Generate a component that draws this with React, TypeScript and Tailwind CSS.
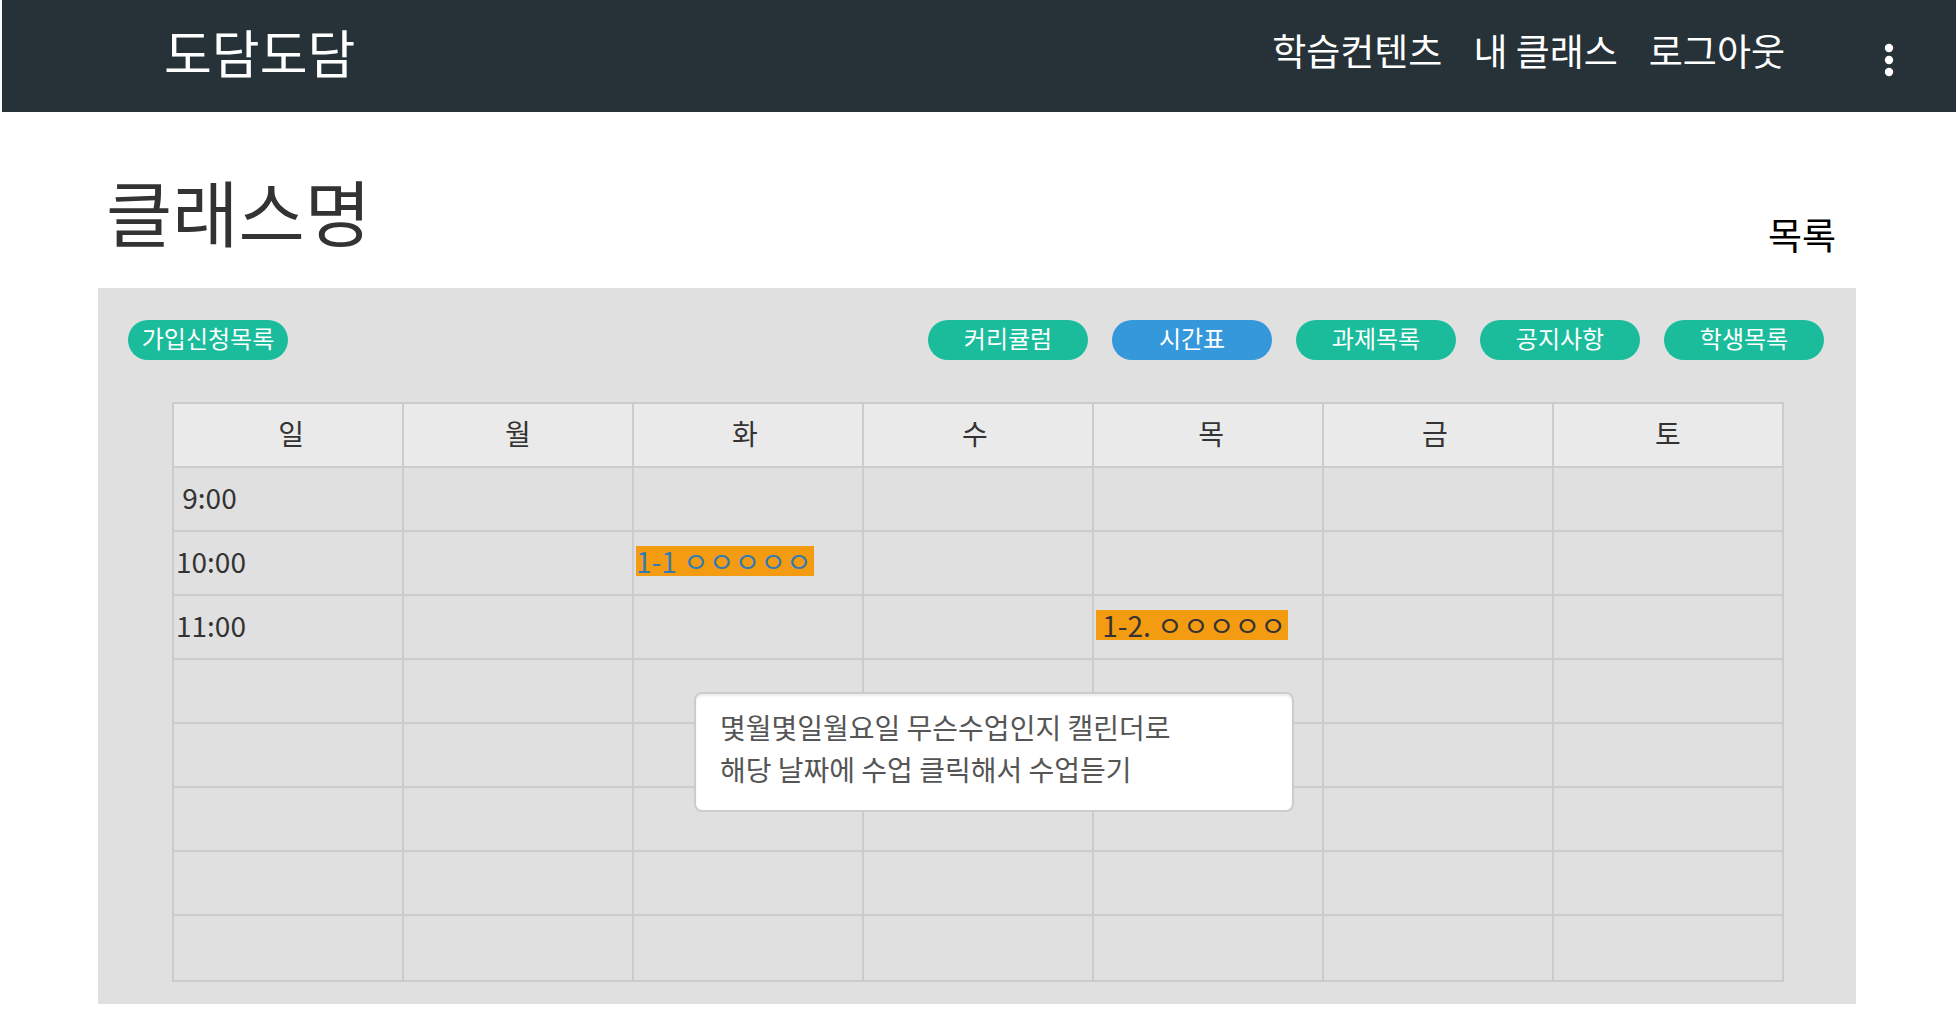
type Lesson = { label: string; tone: string; link?: boolean };

const days = ["\u00a0일", "월", "화\u00a0", "수\u00a0", "\u00a0목", "금\u00a0", "토"];

const times = ["\u00a09:00", "10:00", "11:00", "", "", "", "", ""];

const lessons: Record<string, Lesson> = {
  "1-2": { label: "1-1 ㅇㅇㅇㅇㅇ", tone: "text-[#337ab7]", link: true },
  "2-4": { label: "\u00a01-2. ㅇㅇㅇㅇㅇ", tone: "text-[#333333]" },
};

const tabs = ["커리큘럼", "시간표", "과제목록", "공지사항", "학생목록"];

const note = "몇월몇일월요일 무슨수업인지 캘린더로\n해당 날짜에 수업 클릭해서 수업듣기";

function Pill({ label, active = false }: { label: string; active?: boolean }) {
  return (
    <button
      type="button"
      className={`h-10 w-40 rounded-full pb-1 text-center text-[24px] leading-[36px] text-white ${
        active ? "bg-[#3498db]" : "bg-[#1abc9c]"
      }`}
    >
      {label}
    </button>
  );
}

function LessonTag({ lesson }: { lesson: Lesson }) {
  const box = "block h-[30px] w-fit whitespace-nowrap bg-[#f39c12] pr-0.5 leading-[30px]";
  return lesson.link ? (
    <a href="#lesson" className={`${box} ${lesson.tone}`}>
      {lesson.label}
    </a>
  ) : (
    <span className={`${box} ${lesson.tone}`}>{lesson.label}</span>
  );
}

export default function App() {
  return (
    <div className="min-h-screen bg-white pb-8 font-['Noto_Sans_CJK_KR','Noto_Sans',sans-serif] text-[#333333]">
      <header className="ml-0.5 flex h-28 items-center bg-[#263238] pr-[61px] pl-[162px] text-white">
        <a href="#home" className="pb-2 text-[52px] leading-[64px]">
          도담도담
        </a>
        <nav className="mr-[98px] ml-auto flex gap-[31px] pb-3 text-[37px] leading-[48px]">
          <a href="#contents">학습컨텐츠</a>
          <a href="#classes">내 클래스</a>
          <a href="#logout">로그아웃</a>
        </nav>
        <button type="button" aria-label="메뉴" className="pt-2">
          <svg width="12" height="36" viewBox="0 0 12 36" fill="currentColor" className="block">
            <circle cx="6" cy="6" r="4.2" />
            <circle cx="6" cy="18" r="4.2" />
            <circle cx="6" cy="30" r="4.2" />
          </svg>
        </button>
      </header>

      <main className="mr-[100px] ml-[98px]">
        <div className="flex h-44 items-center justify-between pr-5 pl-2">
          <h1 className="pt-5 text-[72px] leading-[96px]">클래스명</h1>
          <a href="#list" className="pt-[68px] text-[37px] leading-[48px] text-black">
            목록
          </a>
        </div>

        <section className="bg-[#e0e0e0] pt-8 pb-[22px]">
          <div className="flex justify-between pr-8 pl-[30px]">
            <Pill label="가입신청목록" />
            <div className="flex gap-6">
              {tabs.map((tab) => (
                <Pill key={tab} label={tab} active={tab === "시간표"} />
              ))}
            </div>
          </div>

          <div className="relative mt-[42px] mr-[72px] ml-[74px]">
            <table className="w-full table-fixed border-collapse text-[28px] leading-[40px]">
              <thead>
                <tr className="h-16 bg-[#eaeaea]">
                  {days.map((day) => (
                    <th key={day} scope="col" className="border-2 border-[#cccccc] px-0 pt-0 pb-1 font-normal">
                      {day}
                    </th>
                  ))}
                </tr>
              </thead>
              <tbody>
                {times.map((time, row) => (
                  <tr key={row} className="h-16 last:h-[66px]">
                    {days.map((day, col) => {
                      const lesson = lessons[`${row}-${col}`];
                      return (
                        <td key={day} className="border-2 border-[#cccccc] px-0.5 pt-0 pb-1">
                          {col === 0 && time}
                          {lesson && <LessonTag lesson={lesson} />}
                        </td>
                      );
                    })}
                  </tr>
                ))}
              </tbody>
            </table>

            <textarea
              readOnly
              aria-label="안내"
              value={note}
              className="absolute top-[290px] left-[522px] h-[120px] w-[600px] resize-none overflow-hidden rounded-lg border-2 border-[#cccccc] bg-white px-6 py-3 text-[28px] leading-[42px] text-[#555555] shadow-[inset_0_2px_2px_rgba(0,0,0,0.075)] outline-none"
            />
          </div>
        </section>
      </main>
    </div>
  );
}
